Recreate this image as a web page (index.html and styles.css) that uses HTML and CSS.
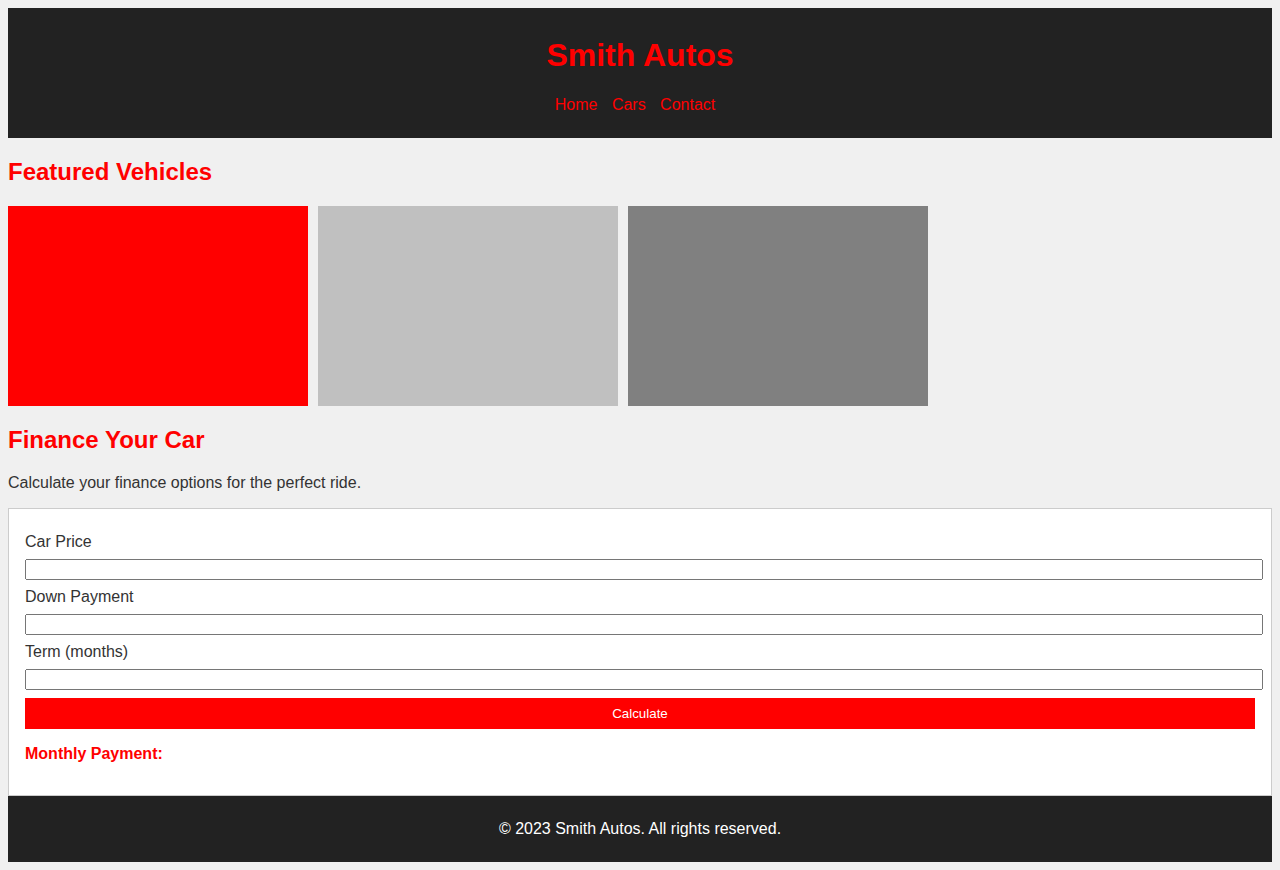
FILE: index.html
```html
<!DOCTYPE html>
<html lang="en">
<head>
<meta charset="utf-8">
<title>Smith Autos</title>
<link rel="stylesheet" href="styles.css">
</head>
<body>
<header class="site-header">
  <h1 class="brand">Smith Autos</h1>
  <nav class="nav">
    <ul class="nav-list">
      <li class="nav-item"><a class="nav-link" href="#">Home</a></li>
      <li class="nav-item"><a class="nav-link" href="#">Cars</a></li>
      <li class="nav-item"><a class="nav-link" href="#">Contact</a></li>
    </ul>
  </nav>
</header>
<main>
  <section class="featured">
    <h2 class="section-title">Featured Vehicles</h2>
    <div class="car-row">
      <div class="car car-red"></div>
      <div class="car car-silver"></div>
      <div class="car car-gray"></div>
    </div>
  </section>
  <section class="finance">
    <h2 class="section-title">Finance Your Car</h2>
    <p class="intro">Calculate your finance options for the perfect ride.</p>
    <form class="finance-form">
      <label class="field-label" for="price">Car Price</label>
      <input class="field-input" type="text" id="price">
      <label class="field-label" for="down">Down Payment</label>
      <input class="field-input" type="text" id="down">
      <label class="field-label" for="term">Term (months)</label>
      <input class="field-input" type="text" id="term">
      <button class="calc-btn" type="button">Calculate</button>
      <p class="result">Monthly Payment:</p>
    </form>
  </section>
</main>
<footer class="site-footer">
  <p class="footer-text">© 2023 Smith Autos. All rights reserved.</p>
</footer>
</body>
</html>
```
FILE: styles.css
```css
body {
  margin: 8px;
  background: #f0f0f0;
  font-family: "Liberation Sans", Arial, sans-serif;
  color: #333;
}

.site-header {
  background: #222;
  padding: 8px;
  text-align: center;
}

.brand {
  color: #ff0000;
  font-size: 32px;
  margin: 21.44px 0;
}

.nav-list {
  list-style: none;
  margin: 16px 0;
  padding: 0;
}

.nav-item {
  display: inline;
  margin-right: 10px;
}

.nav-link {
  color: #ff0000;
  text-decoration: none;
}

.section-title {
  color: #ff0000;
  font-size: 24px;
  margin: 19.92px 0;
}

.car-row {
  display: flex;
  gap: 10px;
}

.car {
  width: 300px;
  height: 200px;
}

.car-red { background: #ff0000; }
.car-silver { background: #c0c0c0; }
.car-gray { background: #808080; }

.intro {
  margin: 16px 0;
}

.finance-form {
  background: #fff;
  border: 1px solid #ccc;
  padding: 16px;
}

.field-label {
  display: block;
  margin: 8px 0;
}

.field-input {
  display: block;
  width: 100%;
  margin: 0;
}

.calc-btn {
  display: block;
  width: 100%;
  margin-top: 8px;
  padding: 8px;
  border: none;
  background: #ff0000;
  color: #fff;
  font-family: "Liberation Sans", Arial, sans-serif;
  font-size: 13.333px;
}

.result {
  color: #ff0000;
  font-weight: bold;
  margin: 16px 0;
}

.site-footer {
  background: #222;
  padding: 24px;
  text-align: center;
}

.footer-text {
  color: #fff;
  margin: 0;
}
```
